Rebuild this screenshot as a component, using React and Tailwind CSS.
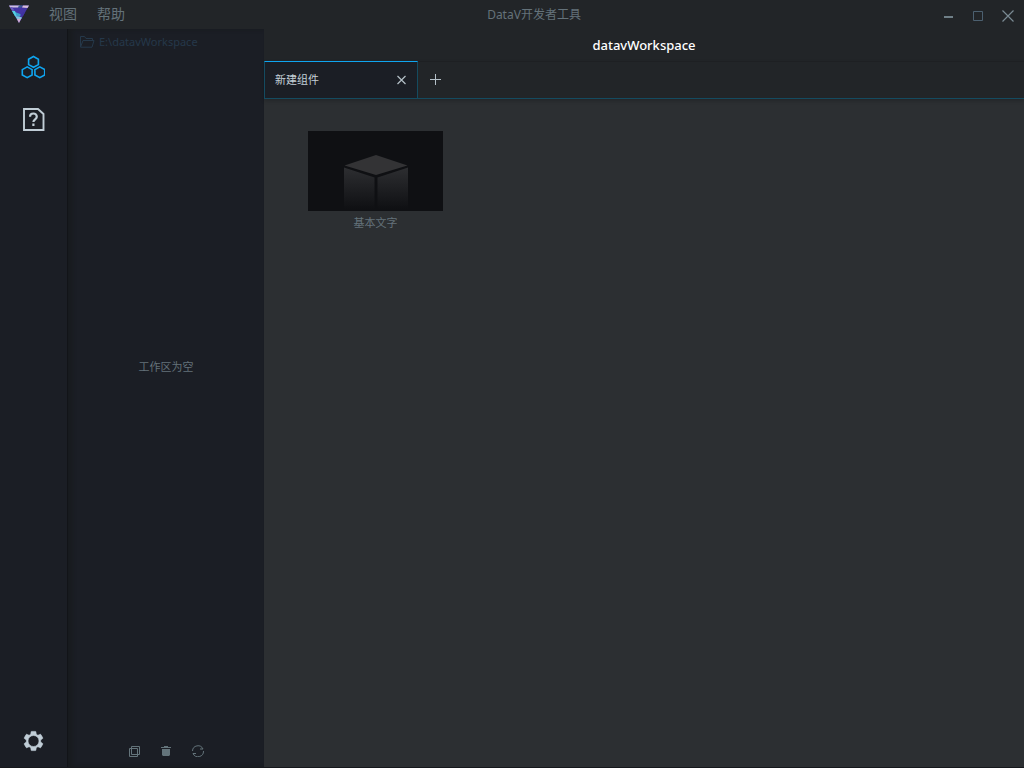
const menus = ['视图', '帮助']
const components = [{ id: 'text', name: '基本文字' }]

function Logo() {
  return (
    <svg className="w-5 h-[18px]" viewBox="0 0 20 18">
      <path d="M0 .5h20L10 18z" fill="#4434a4" />
      <path d="M0 .5h11L9 2.500H1z" fill="#cdbfe2" />
      <path d="M10 .5h4l-2 2H9z" fill="#3a5f8e" />
      <path d="M14 .5h6L18.500 3 13 2.500z" fill="#d8bfd9" />
      <path d="M1 2.500L3 2 5.500 5.500 3.200 6z" fill="#6c5cc0" />
      <path d="M3 6L6 7 12.500 9.500l-2 2L6 11z" fill="#3f9fce" />
      <path d="M3 6h3l1.500 5H6z" fill="#55cfdf" />
      <path d="M16 7.500L14 11 11 10 14 7z" fill="#3f33a0" />
      <path d="M6 11L10 11.500l3 1-.8 1.500L8 14z" fill="#7fc6de" />
      <path d="M7.800 14L12.300 13.500 10 18z" fill="#d0aed2" />
    </svg>
  )
}

function TitleBar() {
  return (
    <header className="h-[29px] flex items-center bg-[#222528] text-[#64727a]">
      <div className="flex-1 flex items-center gap-5 pl-[9px] pb-px">
        <Logo />
        {menus.map((menu) => (
          <button key={menu} className="text-sm leading-5">
            {menu}
          </button>
        ))}
      </div>
      <div className="text-xs leading-4 pl-[45px]">DataV开发者工具</div>
      <div className="flex-1 flex items-center justify-end gap-[18px] pr-[10px] pt-[2px]">
        <button aria-label="最小化">
          <svg className="w-3 h-3" viewBox="0 0 12 12">
            <path d="M2 6h9v2H2z" fill="#6f7f87" />
          </svg>
        </button>
        <button aria-label="最大化">
          <svg className="w-3 h-3" viewBox="0 0 12 12" fill="none" stroke="#4c6070">
            <path d="M1.500 1.500h9v9h-9z" />
          </svg>
        </button>
        <button aria-label="关闭">
          <svg className="w-3 h-3" viewBox="0 0 12 12" fill="none" stroke="#7a8a92" strokeWidth="1.200">
            <path d="M.5 .5l11 11M11.500 .5l-11 11" />
          </svg>
        </button>
      </div>
    </header>
  )
}

function NavBar() {
  return (
    <nav className="w-[68px] shrink-0 flex flex-col items-center pt-[26px] pb-[14px] pr-px border-r border-[#121418] bg-[#1b1e25]">
      <button aria-label="组件">
        <svg className="w-6 h-6" viewBox="0 0 24 24" fill="none" stroke="#0fa5f0" strokeWidth="1.600">
          <path d="M12.500 1.500l4.900 2.700v5.400l-4.900 2.700-4.900-2.700V4.200z" />
          <path d="M6.200 11.900l4.900 2.700V20l-4.900 2.700L1.300 20v-5.400z" />
          <path d="M18.800 11.900l4.900 2.700V20l-4.900 2.700-4.900-2.700v-5.400z" />
        </svg>
      </button>
      <button aria-label="帮助文档" className="mt-7">
        <svg className="w-6 h-6" viewBox="0 0 24 24" fill="none" stroke="#c0cdd6" strokeWidth="2.200">
          <path d="M3 2h14l5.500 5v16H3z" strokeWidth="1.900" />
          <path d="M9 9.800c0-4.400 6.800-4.400 6.800 0 0 2.400-3.400 2.600-3.400 5.200M12.400 16.500V19" />
        </svg>
      </button>
      <button aria-label="设置" className="mt-auto">
        <svg className="w-6 h-6" viewBox="-.5 0 24 24" fill="#c0cdd6" fillRule="evenodd" stroke="#c0cdd6" strokeWidth=".6">
          <path d="M19.140 12.940c.04-.3.06-.61.06-.94 0-.32-.02-.64-.07-.94l2.030-1.580c.18-.14.23-.41.12-.61l-1.920-3.320c-.12-.22-.37-.29-.59-.22l-2.390.96c-.5-.38-1.030-.7-1.620-.94l-.36-2.540c-.04-.24-.24-.41-.48-.41h-3.840c-.24 0-.43.17-.47.41l-.36 2.540c-.59.24-1.130.57-1.620.94l-2.390-.96c-.22-.08-.47 0-.59.22L2.740 8.870c-.12.21-.08.47.12.61l2.030 1.580c-.05.3-.09.63-.09.94s.02.64.07.94l-2.030 1.580c-.18.14-.23.41-.12.61l1.920 3.320c.12.22.37.29.59.22l2.390-.96c.5.38 1.030.7 1.620.94l.36 2.540c.05.24.24.41.48.41h3.840c.24 0 .44-.17.47-.41l.36-2.540c.59-.24 1.130-.56 1.620-.94l2.390.96c.22.08.47 0 .59-.22l1.920-3.320c.12-.22.07-.47-.12-.61l-2.010-1.580zM12 6.500a5.500 5.500 0 1 0 0 11a5.500 5.500 0 1 0 0-11z" />
        </svg>
      </button>
    </nav>
  )
}

function Workspace() {
  return (
    <aside className="w-[196px] shrink-0 flex flex-col bg-[#1b1e25] shadow-[inset_4px_0_4px_rgba(24,26,29,0.8)]">
      <div className="flex items-center gap-1 h-[26px] px-3 text-[#25384a]">
        <svg className="w-[15px] h-3" viewBox="0 0 15 12" fill="none" stroke="currentColor">
          <path d="M.5 11V.5h4l1.500 2h6.500v2M.5 11.200L3 4.500h11l-2 6.700z" />
        </svg>
        <span className="text-[11px] leading-4">E:\datavWorkspace</span>
      </div>
      <div className="flex-1 flex items-center justify-center pb-[66px] text-[11px] leading-4 text-[#64727a]">
        工作区为空
      </div>
      <div className="flex justify-center gap-5 pb-[10px] text-[#64747b]">
        <button aria-label="复制">
          <svg className="w-3 h-3" viewBox="0 0 12 12" fill="none" stroke="currentColor">
            <path d="M3.500 1.500h8v8h-8zM1.500 3.500h8v8h-8z" />
          </svg>
        </button>
        <button aria-label="删除">
          <svg className="w-3 h-3" viewBox="0 0 12 12" fill="currentColor">
            <path d="M1 2h3V1h4v1h3v1H1zM2 4h8v6l-1 1H3l-1-1z" />
          </svg>
        </button>
        <button aria-label="刷新">
          <svg className="w-3 h-3" viewBox="0 0 12 12" fill="none" stroke="currentColor">
            <path d="M.5 6A5.500 5.500 0 0 1 11 4H8M11.500 6A5.500 5.500 0 0 1 1 8.500H4" />
          </svg>
        </button>
      </div>
    </aside>
  )
}

function Tabs() {
  return (
    <div className="h-[38px] flex border-t border-b border-t-[#1e2023] border-b-[#144b60] bg-[#222528] shadow-[0_2px_4px_rgba(0,0,0,0.2)]">
      <div className="w-[154px] -mt-px flex items-center justify-between px-[10px] border border-b-0 border-x-[#144b60] border-t-[#0fa5f0] bg-[#1b1e25]">
        <span className="text-[11px] leading-4 text-[#c4d0d8]">新建组件</span>
        <button aria-label="关闭标签">
          <svg className="w-[11px] h-[11px]" viewBox="0 0 11 11" fill="none" stroke="#b4c0c8" strokeWidth="1.200">
            <path d="M1.500 1l8 8M9.500 1l-8 8" />
          </svg>
        </button>
      </div>
      <button aria-label="新建标签" className="px-3">
        <svg className="w-3 h-3" viewBox="0 0 12 12" fill="none" stroke="#b4c0c8">
          <path d="M0 5.500h11M5.500 0v11" />
        </svg>
      </button>
    </div>
  )
}

function Cube() {
  return (
    <svg className="w-[135px] h-20" viewBox="0 0 135 80">
      <defs>
        <linearGradient id="side" x1="0" y1="0" x2="0" y2="1">
          <stop offset="0" stopColor="#2d2e31" />
          <stop offset="1" stopColor="#0f1013" />
        </linearGradient>
      </defs>
      <path d="M68 24l31.500 10.500L68 44 36.500 34.500z" fill="#333335" />
      <path d="M36 36.500l30.500 10v31.500H36z" fill="url(#side)" />
      <path d="M100 36.500L69.500 46.500v31.500H100z" fill="url(#side)" />
    </svg>
  )
}

function App() {
  return (
    <div className="min-h-screen flex flex-col bg-[#1b1e25] font-['Noto_Sans','Noto_Sans_CJK_SC',sans-serif]">
      <TitleBar />
      <div className="flex-1 flex border-b border-[#16181c]">
        <NavBar />
        <Workspace />
        <main className="flex-1 flex flex-col bg-[#2c2f32]">
          <h1 className="h-8 flex items-center justify-center bg-[#222528] text-[13px] leading-4 font-medium text-white">
            datavWorkspace
          </h1>
          <Tabs />
          <div className="flex flex-wrap gap-6 px-11 py-8">
            {components.map((item) => (
              <button key={item.id} className="flex flex-col items-center">
                <span className="block bg-[#0f1013]">
                  <Cube />
                </span>
                <span className="mt-1 text-[11px] leading-4 text-[#64727a]">{item.name}</span>
              </button>
            ))}
          </div>
        </main>
      </div>
    </div>
  )
}

export default App
